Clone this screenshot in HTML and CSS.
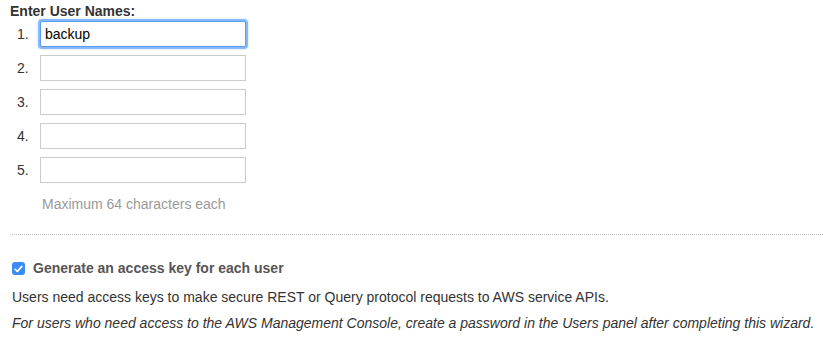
FILE: index.html
```html
<!DOCTYPE html>
<html lang="en">
<head>
    <meta charset="UTF-8">
    <meta name="viewport" content="width=device-width, initial-scale=1.0">
    <title>Add Users</title>
    <link rel="stylesheet" href="styles.css">
</head>
<body>
    <div class="wizard">
        <div class="names">
            <div class="names-title">Enter User Names:</div>
            <ol class="name-list">
                <li class="name-row">
                    <span class="name-num">1.</span>
                    <input type="text" class="name-input focused" value="backup">
                </li>
                <li class="name-row">
                    <span class="name-num">2.</span>
                    <input type="text" class="name-input">
                </li>
                <li class="name-row">
                    <span class="name-num">3.</span>
                    <input type="text" class="name-input">
                </li>
                <li class="name-row">
                    <span class="name-num">4.</span>
                    <input type="text" class="name-input">
                </li>
                <li class="name-row">
                    <span class="name-num">5.</span>
                    <input type="text" class="name-input">
                </li>
            </ol>
            <div class="names-hint">Maximum 64 characters each</div>
        </div>

        <div class="divider"></div>

        <div class="access">
            <label class="access-check">
                <span class="checkbox">
                    <svg width="9" height="8" viewBox="0 0 9 8">
                        <path d="M1.2 4.3 L3.4 6.4 L7.8 1.4" fill="none" stroke="#fff" stroke-width="1.7" stroke-linecap="round" stroke-linejoin="round"/>
                    </svg>
                </span>
                Generate an access key for each user
            </label>
            <p class="access-text">Users need access keys to make secure REST or Query protocol requests to AWS service APIs.</p>
            <p class="access-note">For users who need access to the AWS Management Console, create a password in the Users panel after completing this wizard.</p>
        </div>
    </div>
</body>
</html>
```

FILE: styles.css
```css
body {
    margin: 0;
    font-family: "Liberation Sans", Arial, sans-serif;
    font-size: 14px;
    line-height: 17px;
    color: #333333;
    background-color: #FFFFFF;
}

.wizard {
    padding: 3px 0 0 10px;
}

.names-title {
    font-weight: bold;
    color: #333333;
}

.name-list {
    list-style: none;
    margin: 1px 0 0 0;
    padding: 0;
    display: flex;
    flex-direction: column;
    gap: 8px;
}

.name-row {
    display: flex;
    align-items: center;
    height: 26px;
}

.name-num {
    width: 30px;
    padding-left: 7px;
    box-sizing: border-box;
    color: #333333;
}

.name-input {
    width: 206px;
    height: 26px;
    box-sizing: border-box;
    margin: 0;
    padding: 0 4px;
    border: 1px solid #CCCCCC;
    border-radius: 0;
    font-family: "Liberation Sans", Arial, sans-serif;
    font-size: 14px;
    color: #000000;
    outline: none;
}

.name-input.focused {
    border: 1px solid #5A9CF0;
    box-shadow: 0 0 0 2px rgba(110, 170, 250, 0.75), 0 0 3px 2px rgba(110, 170, 250, 0.4);
    border-radius: 2px;
}

.names-hint {
    margin: 13px 0 0 32px;
    color: #999999;
}

.divider {
    margin: 21px 0 0 2px;
    border-top: 1px dotted #BBBBBB;
}

.access {
    padding: 25px 0 0 2px;
}

.access-check {
    display: flex;
    align-items: center;
    gap: 8px;
    font-weight: bold;
    color: #555555;
}

.checkbox {
    width: 13px;
    height: 13px;
    border-radius: 3px;
    background-color: #3B8CF6;
    display: flex;
    align-items: center;
    justify-content: center;
}

.access-text {
    margin: 12px 0 0 0;
}

.access-note {
    margin: 9px 0 0 0;
    font-style: italic;
}
```
